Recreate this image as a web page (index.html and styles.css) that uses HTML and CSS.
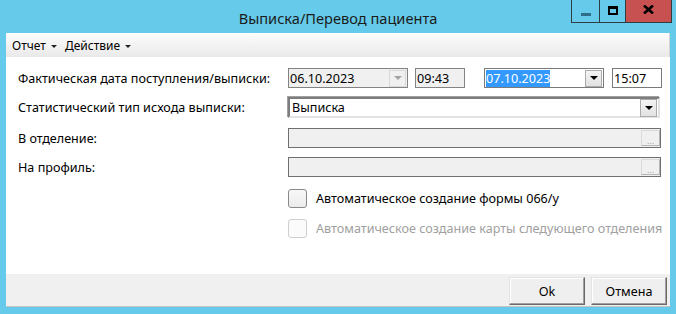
FILE: index.html
```html
<!DOCTYPE html>
<html lang="ru">
<head>
    <meta charset="UTF-8">
    <title>Выписка/Перевод пациента</title>
    <link rel="stylesheet" href="styles.css">
</head>
<body>
<div class="window">
    <div class="titlebar">
        <div></div>
        <div class="title">Выписка/Перевод пациента</div>
        <div class="controls">
            <span class="ctl ctl-min"><i></i></span>
            <span class="ctl ctl-max"><i></i></span>
            <span class="ctl ctl-close">
                <svg width="11" height="9" viewBox="0 0 11 9"><path d="M1 0.5 L10 8.5 M10 0.5 L1 8.5" stroke="#000" stroke-width="2.6"/></svg>
            </span>
        </div>
    </div>
    <div class="client">
        <div class="menubar">
            <span class="menu">Отчет <b class="caret"></b></span>
            <span class="menu">Действие <b class="caret"></b></span>
        </div>
        <div class="content">
            <div class="form">
                <div class="row row-1">
                    <label>Фактическая дата поступления/выписки:</label>
                    <div class="dates">
                        <div class="box box-date disabled">
                            <span class="val">06.10.2023</span>
                            <span class="drop"><b class="arrow"></b></span>
                        </div>
                        <div class="box box-time disabled"><span class="val">09:43</span></div>
                        <div class="box box-date date-2">
                            <span class="val"><span class="sel">07.10.2023</span></span>
                            <span class="drop"><b class="arrow"></b></span>
                        </div>
                        <div class="box box-time time-2"><span class="val">15:07</span></div>
                    </div>
                </div>
                <div class="row row-2">
                    <label>Статистический тип исхода выписки:</label>
                    <div class="combo">
                        <span class="val">Выписка</span>
                        <span class="drop"><b class="arrow"></b></span>
                    </div>
                </div>
                <div class="row row-3">
                    <label>В отделение:</label>
                    <div class="picker"><span class="val"></span><span class="dots">...</span></div>
                </div>
                <div class="row row-4">
                    <label>На профиль:</label>
                    <div class="picker"><span class="val"></span><span class="dots">...</span></div>
                </div>
            </div>
            <div class="checks">
                <div class="check"><span class="cb"></span>Автоматическое создание формы 066/у</div>
                <div class="check disabled"><span class="cb"></span>Автоматическое создание карты следующего отделения</div>
            </div>
        </div>
        <div class="footer">
            <button class="btn">Ok</button>
            <button class="btn">Отмена</button>
        </div>
    </div>
</div>
</body>
</html>
```

FILE: styles.css
```css
body{margin: 0}
.window{
    width: 676px;
    height: 314px;
    background: #66cbea;
    font-family: "Noto Sans", "Open Sans", sans-serif;
    font-size: 12.6px;
    color: #000;
    display: flex;
    flex-direction: column;
}
.titlebar{
    height: 33px;
    display: grid;
    grid-template-columns: 1fr auto 1fr;
    align-items: start;
}
.title{
    font-size: 14.6px;
    color: #1b1b1b;
    line-height: 36px;
}
.controls{
    justify-self: end;
    display: flex;
    margin-right: 4px;
}
.ctl{
    height: 22px;
    border: 1px solid #2f3e44;
    border-top: 0;
    border-right: 0;
    display: flex;
    align-items: center;
    justify-content: center;
}
.ctl-min{width: 27px}
.ctl-min i{
    width: 10px;
    height: 3px;
    margin-top: 6px;
    background: #2e6f88;
}
.ctl-max{width: 25px}
.ctl-max i{
    width: 6px;
    height: 4px;
    border: 2px solid #000;
    border-top-width: 3px;
    margin-top: -2px;
}
.ctl-close{
    width: 45px;
    background: #c75050;
    border-right: 1px solid #2f3e44;
}
.ctl-close svg{margin-top: -3px}
.client{
    margin: 0 6px;
    width: 664px;
    height: 274px;
    display: flex;
    flex-direction: column;
    background: #fff;
}
.menubar{
    height: 24px;
    display: flex;
    align-items: center;
    gap: 8px;
    padding-left: 6px;
    background: linear-gradient(#fdfdfd, #e9e9e9);
    border-right: 1px solid #d4d4d4;
    font-size: 12px;
}
.caret{
    display: inline-block;
    border-left: 3px solid transparent;
    border-right: 3px solid transparent;
    border-top: 3px solid #222;
    vertical-align: middle;
    margin-left: 2px;
}
.content{
    flex: 1;
    padding: 11px 0 0 12px;
}
.row{
    display: flex;
    align-items: center;
}
.row label{width: 270px}
.row-1{height: 20px}
.row-2{height: 21px; margin-top: 9px}
.row-3{height: 20px; margin-top: 10px}
.row-4{height: 20px; margin-top: 9px}
.dates{
    display: flex;
    gap: 7px;
}
.box{
    height: 18px;
    border: 1px solid #7a7a7a;
    display: flex;
    align-items: center;
    background: #fff;
}
.box.disabled{background: #f0f0f0; border-color: #838383}
.val{
    flex: 1;
    padding-left: 1px;
    white-space: nowrap;
}
.box-date{width: 118px}
.box-time{width: 48px}
.date-2{margin-left: 12px}
.time-2{margin-left: 1px}
.sel{
    background: #3399ff;
    color: #fff;
}
.drop{
    width: 15px;
    height: 15px;
    margin-right: 1px;
    border: 1px solid #acacac;
    background: linear-gradient(#f3f3f3, #e2e2e2);
    display: flex;
    align-items: center;
    justify-content: center;
}
.arrow{
    border-left: 4px solid transparent;
    border-right: 4px solid transparent;
    border-top: 4px solid #000;
}
.disabled .drop{background: #f0f0f0; border-color: #d9d9d9}
.disabled .arrow{border-top-color: #a3a3a3}
.combo{
    width: 368px;
    height: 17px;
    border: 2px solid;
    border-color: #7d7d7d #e3e3e3 #e3e3e3 #7d7d7d;
    box-shadow: -1px -1px 0 #a0a0a0;
    display: flex;
    align-items: center;
    background: #fff;
}
.combo .val{padding-left: 2px}
.combo .drop{height: 16px}
.picker{
    width: 371px;
    height: 18px;
    border: 1px solid #6f6f6f;
    background: #f0f0f0;
    display: flex;
}
.dots{
    width: 17px;
    margin: 1px 0;
    border: 1px solid #dadada;
    border-right-color: #b5b5b5;
    border-bottom-color: #b5b5b5;
    color: #a8a8a8;
    font-size: 9px;
    line-height: 20px;
    text-align: center;
}
.checks{
    padding-left: 270px;
    padding-top: 12px;
}
.check{
    height: 19px;
    display: flex;
    align-items: center;
    gap: 9px;
}
.check + .check{margin-top: 11px}
.cb{
    width: 17px;
    height: 17px;
    border: 1px solid #8a8a8a;
    border-radius: 3px;
    background: linear-gradient(#f7f7f7, #ececec);
}
.check.disabled{color: #a0a0a0}
.check.disabled .cb{border-color: #cfcfcf; background: #fbfbfb}
.footer{
    height: 33px;
    box-sizing: border-box;
    background: #f0f0f0;
    border-bottom: 1px solid #c4c4c4;
    display: flex;
    justify-content: flex-end;
    align-items: flex-start;
    gap: 6px;
    padding: 3px 3px 0 0;
}
.btn{
    width: 76px;
    height: 28px;
    font-family: inherit;
    font-size: 12.6px;
    background: #efefef;
    border: 1px solid;
    border-color: #e3e3e3 #696969 #696969 #e3e3e3;
    box-shadow: inset -1px -1px 0 #a0a0a0, inset 1px 1px 0 #fff;
    padding: 0;
}
```
